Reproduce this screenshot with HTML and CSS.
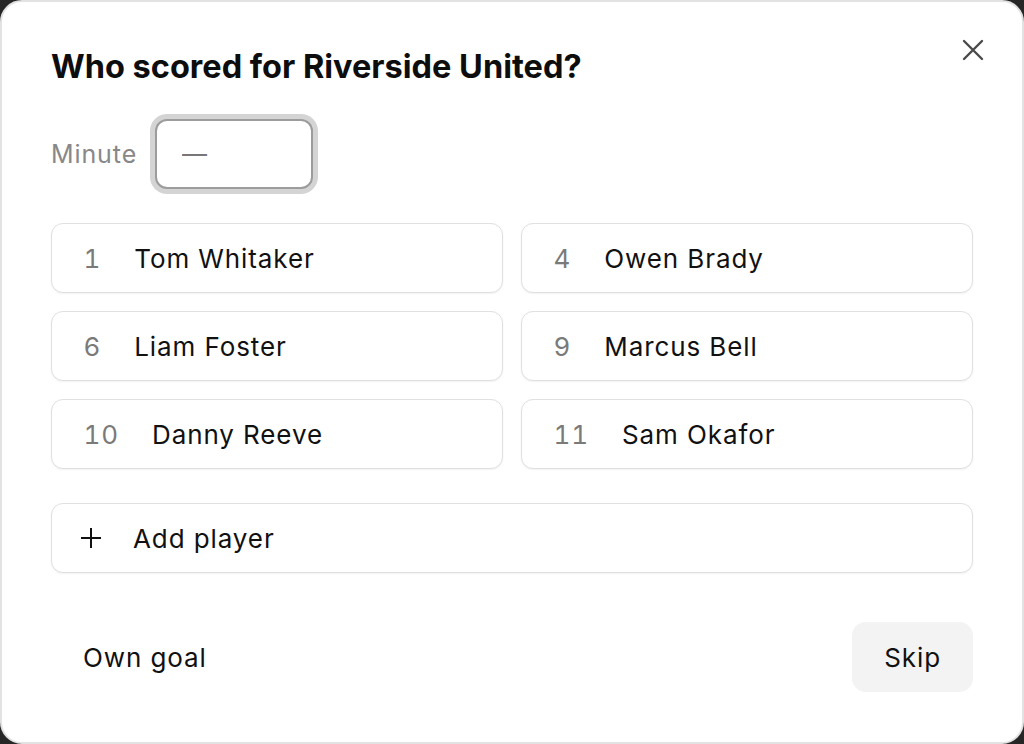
FILE: index.html
```html
<!DOCTYPE html>
<html lang="en">
<head>
  <meta charset="UTF-8">
  <meta name="viewport" content="width=device-width, initial-scale=1.0">
  <title>Goal scorer</title>
  <link rel="stylesheet" href="styles.css">
</head>
<body>
<div class="dialog">
  <button class="close" aria-label="Close">
    <svg width="22" height="22" viewBox="0 0 22 22">
      <path d="M2 2 L20 20 M20 2 L2 20" stroke="#4a4a4a" stroke-width="2.4" stroke-linecap="round" fill="none"/>
    </svg>
  </button>

  <h1 class="title">Who scored for Riverside United?</h1>

  <div class="minute-row">
    <label for="minute" class="minute-label">Minute</label>
    <input id="minute" class="minute-input" type="text" placeholder="—">
  </div>

  <!-- Squad list -->
  <div class="players">
    <button class="player"><span class="num">1</span><span class="name">Tom Whitaker</span></button>
    <button class="player"><span class="num">4</span><span class="name">Owen Brady</span></button>
    <button class="player"><span class="num">6</span><span class="name">Liam Foster</span></button>
    <button class="player"><span class="num">9</span><span class="name">Marcus Bell</span></button>
    <button class="player"><span class="num">10</span><span class="name">Danny Reeve</span></button>
    <button class="player"><span class="num">11</span><span class="name">Sam Okafor</span></button>
  </div>

  <button class="add-player">
    <svg width="22" height="22" viewBox="0 0 22 22">
      <path d="M11 1 V21 M1 11 H21" stroke="#111" stroke-width="2" fill="none"/>
    </svg>
    <span>Add player</span>
  </button>

  <div class="footer">
    <button class="own-goal">Own goal</button>
    <button class="skip">Skip</button>
  </div>
</div>
</body>
</html>
```

FILE: styles.css
```css
html, body {
  margin: 0;
  height: 100%;
}
body {
  background-color: #262626;
  font-family: Inter, "Noto Sans", sans-serif;
  color: #111;
}
button {
  font-family: inherit;
  cursor: pointer;
}

.dialog {
  position: relative;
  box-sizing: border-box;
  width: 1024px;
  height: 744px;
  background: #fff;
  border: 2px solid #e2e2e2;
  border-radius: 22px;
  padding: 45px 49px 0;
  display: flex;
  flex-direction: column;
}

.close {
  position: absolute;
  top: 37px;
  right: 38px;
  width: 22px;
  height: 22px;
  padding: 0;
  border: none;
  background: none;
  display: flex;
}

.title {
  margin: 0;
  font-size: 32.5px;
  line-height: 40px;
  font-weight: 700;
  color: #0d0d0d;
}

/* Minute field */
.minute-row {
  display: flex;
  align-items: center;
  gap: 18px;
  margin-top: 32px;
}
.minute-label {
  font-size: 25px;
  letter-spacing: 0.9px;
  color: #888;
}
.minute-input {
  box-sizing: border-box;
  width: 158px;
  height: 70px;
  border: 2px solid #9c9c9c;
  border-radius: 12px;
  box-shadow: 0 0 0 5px #d4d4d4;
  padding: 0 0 0 25px;
  font-family: inherit;
  font-size: 25px;
  color: #111;
  outline: none;
}
.minute-input::placeholder {
  color: #777;
}

/* Player grid */
.players {
  display: grid;
  grid-template-columns: 1fr 1fr;
  gap: 18px;
  margin-top: 34px;
}
.player, .add-player {
  box-sizing: border-box;
  height: 70px;
  display: flex;
  align-items: center;
  background: #fff;
  border: 1.5px solid #e0e0e0;
  border-radius: 12px;
  box-shadow: 0 1px 2px rgba(0, 0, 0, 0.06);
  font-size: 26px;
  letter-spacing: 0.9px;
  color: #111;
  text-align: left;
}
.player {
  padding: 0 0 0 31.5px;
  gap: 33px;
}
.num {
  color: #7a7a7a;
  font-variant-numeric: tabular-nums;
}

.add-player {
  margin-top: 34px;
  padding: 0 0 0 28px;
  gap: 31px;
}
.add-player svg {
  flex-shrink: 0;
}

/* Footer actions */
.footer {
  display: flex;
  justify-content: space-between;
  margin-top: 49px;
}
.own-goal, .skip {
  height: 70px;
  border: none;
  border-radius: 14px;
  padding: 0 32px;
  font-size: 26px;
  letter-spacing: 0.9px;
  color: #111;
}
.own-goal {
  background: none;
}
.skip {
  background: #f3f3f3;
}
```
